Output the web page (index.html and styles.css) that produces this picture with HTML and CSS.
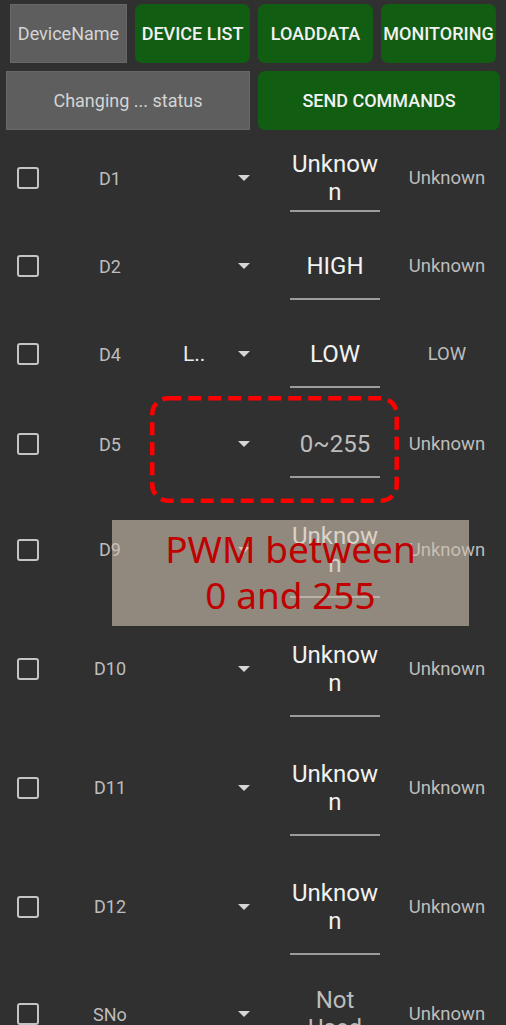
FILE: index.html
```html
<!DOCTYPE html>
<html lang="en">
<head>
    <meta charset="UTF-8">
    <meta name="viewport" content="width=device-width, initial-scale=1.0">
    <title>Pin Control</title>
    <link rel="stylesheet" href="styles.css">
</head>
<body>
    <div class="screen">
        <div class="toolbar">
            <div class="toolbar-row">
                <div class="label-box">DeviceName</div>
                <button class="btn">DEVICE LIST</button>
                <button class="btn">LOADDATA</button>
                <button class="btn">MONITORING</button>
            </div>
            <div class="toolbar-row second">
                <div class="label-box">Changing ... status</div>
                <button class="btn">SEND COMMANDS</button>
            </div>
        </div>

        <div class="pins">
            <div class="pin-row">
                <span class="check"></span>
                <span class="pin-name">D1</span>
                <div class="spinner"><span class="spinner-text"></span><span class="caret"></span></div>
                <div class="edit squeezed"><div class="value">Unknown</div><div class="line"></div></div>
                <span class="state">Unknown</span>
            </div>
            <div class="pin-row">
                <span class="check"></span>
                <span class="pin-name">D2</span>
                <div class="spinner"><span class="spinner-text"></span><span class="caret"></span></div>
                <div class="edit"><div class="value">HIGH</div><div class="line"></div></div>
                <span class="state">Unknown</span>
            </div>
            <div class="pin-row">
                <span class="check"></span>
                <span class="pin-name">D4</span>
                <div class="spinner"><span class="spinner-text">L..</span><span class="caret"></span></div>
                <div class="edit"><div class="value">LOW</div><div class="line"></div></div>
                <span class="state">LOW</span>
            </div>
            <div class="pin-row pwm">
                <span class="check"></span>
                <span class="pin-name">D5</span>
                <div class="spinner"><span class="spinner-text"></span><span class="caret"></span></div>
                <div class="edit"><div class="value hint">0~255</div><div class="line"></div></div>
                <span class="state">Unknown</span>
            </div>
            <div class="pin-row two-line">
                <span class="check"></span>
                <span class="pin-name">D9</span>
                <div class="spinner"><span class="spinner-text"></span><span class="caret"></span></div>
                <div class="edit"><div class="value">Unknown</div><div class="line"></div></div>
                <span class="state">Unknown</span>
            </div>
            <div class="pin-row two-line">
                <span class="check"></span>
                <span class="pin-name">D10</span>
                <div class="spinner"><span class="spinner-text"></span><span class="caret"></span></div>
                <div class="edit"><div class="value">Unknown</div><div class="line"></div></div>
                <span class="state">Unknown</span>
            </div>
            <div class="pin-row two-line">
                <span class="check"></span>
                <span class="pin-name">D11</span>
                <div class="spinner"><span class="spinner-text"></span><span class="caret"></span></div>
                <div class="edit"><div class="value">Unknown</div><div class="line"></div></div>
                <span class="state">Unknown</span>
            </div>
            <div class="pin-row two-line">
                <span class="check"></span>
                <span class="pin-name">D12</span>
                <div class="spinner"><span class="spinner-text"></span><span class="caret"></span></div>
                <div class="edit"><div class="value">Unknown</div><div class="line"></div></div>
                <span class="state">Unknown</span>
            </div>
            <div class="pin-row last">
                <span class="check"></span>
                <span class="pin-name">SNo</span>
                <div class="spinner"><span class="spinner-text"></span><span class="caret"></span></div>
                <div class="edit"><div class="value hint">Not Used</div><div class="line"></div></div>
                <span class="state">Unknown</span>
            </div>
        </div>

        <!-- annotation drawn over the screenshot -->
        <svg class="callout-frame" width="249" height="107" viewBox="0 0 249 107">
            <rect x="2.25" y="2.25" width="244.5" height="102.5" rx="16" ry="16"
                  fill="none" stroke="#ff0000" stroke-width="4.5" stroke-dasharray="13 7"/>
        </svg>
        <div class="callout-note">PWM between<br>0 and 255</div>
    </div>
</body>
</html>
```

FILE: styles.css
```css
:root {
    --bg-color: #303030;
    --green: #115d12;
    --grey-box: #5e5e5e;
    --text-light: #f2f2f2;
    --text-dim: #bdbdbd;
    --line-color: #9c9c9c;
}

body {
    margin: 0;
    background-color: var(--bg-color);
    font-family: Roboto, 'Liberation Sans', sans-serif;
    overflow: hidden;
}

.screen {
    position: relative;
    width: 506px;
    height: 1025px;
    overflow: hidden;
}

.toolbar {
    padding-top: 4px;
}

.toolbar-row {
    display: flex;
    gap: 8px;
    padding: 0 10px;
    height: 59px;
}

.toolbar-row.second {
    margin-top: 8px;
    padding: 0 6px;
}

.label-box, .btn {
    flex: 1;
    display: flex;
    align-items: center;
    justify-content: center;
    font-size: 18px;
    font-family: inherit;
}

.label-box {
    background-color: var(--grey-box);
    border: 1px solid #686868;
    color: #d4d4d4;
}

.btn {
    background-color: var(--green);
    border: none;
    border-radius: 7px;
    color: var(--text-light);
    font-weight: 500;
    padding: 0;
}

.pins {
    margin-top: 4px;
}

.pin-row {
    display: grid;
    grid-template-columns: 56px 108px 126px 90px 1fr;
    align-items: center;
    height: 88px;
}

.pin-row.pwm {
    height: 92px;
}

.pin-row.two-line {
    height: 119px;
}

.pin-row.last {
    height: 94px;
}

.check {
    justify-self: center;
    width: 22px;
    height: 22px;
    box-sizing: border-box;
    border: 2px solid #c4c4c4;
    border-radius: 3px;
}

.pin-name {
    text-align: center;
    font-size: 18px;
    color: var(--text-dim);
}

.spinner {
    display: flex;
    align-items: center;
    padding: 0 40px 0 19px;
}

.spinner-text {
    font-size: 21px;
    color: #ececec;
}

.caret {
    margin-left: auto;
    width: 0;
    height: 0;
    border-left: 6px solid transparent;
    border-right: 6px solid transparent;
    border-top: 6px solid #d6d6d6;
}

.edit {
    display: flex;
    flex-direction: column;
    padding-top: 20px;
}

.edit .value {
    font-size: 24px;
    line-height: 28px;
    text-align: center;
    color: var(--text-light);
    overflow-wrap: anywhere;
}

.edit .value.hint {
    color: var(--text-dim);
}

.edit .line {
    height: 2px;
    margin-top: 18px;
    background-color: var(--line-color);
}

.edit.squeezed {
    padding-top: 6px;
}

.edit.squeezed .value {
    margin-bottom: -14px;
}

.state {
    padding-left: 8px;
    text-align: center;
    font-size: 18.5px;
    color: var(--text-dim);
}

.callout-frame {
    position: absolute;
    left: 150px;
    top: 396px;
}

.callout-note {
    position: absolute;
    left: 112px;
    top: 520px;
    width: 357px;
    height: 106px;
    box-sizing: border-box;
    padding-top: 6px;
    background-color: rgba(205, 190, 175, 0.62);
    color: #c00000;
    font-family: 'Noto Sans', sans-serif;
    font-size: 37px;
    line-height: 46px;
    text-align: center;
}
```
